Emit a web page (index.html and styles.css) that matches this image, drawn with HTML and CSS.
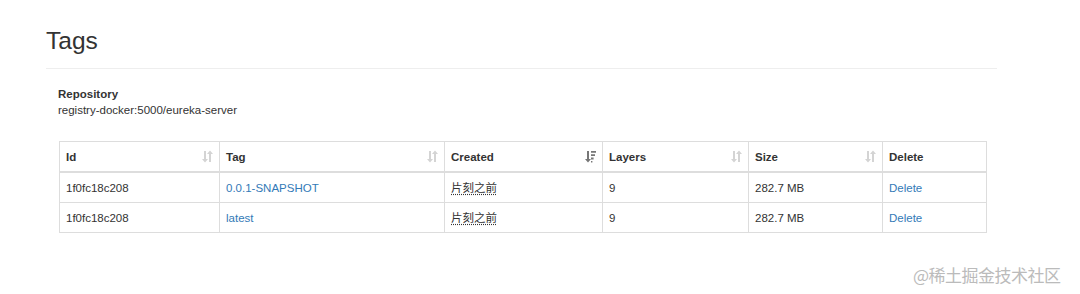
FILE: index.html
```html
<!DOCTYPE html>
<html>
<head>
<meta charset="utf-8">
<link rel="stylesheet" href="styles.css">
</head>
<body>
<div class="container">
  <div class="page-header"><h1>Tags</h1></div>
  <div class="repo">
    <div class="repo-label">Repository</div>
    <div class="repo-value">registry-docker:5000/eureka-server</div>
  </div>
  <table class="tags">
    <colgroup>
      <col style="width:160px"><col style="width:225px"><col style="width:158px"><col style="width:146px"><col style="width:134px"><col style="width:104px">
    </colgroup>
    <thead>
      <tr>
        <th><span>Id</span><svg class="sort" viewBox="0 0 11 13"><path d="M2 1h2v8h2l-3 3.5L0 9h2z"/><path d="M8 0.5l3 3.5H9v8H7V4H5z"/></svg></th>
        <th><span>Tag</span><svg class="sort" viewBox="0 0 11 13"><path d="M2 1h2v8h2l-3 3.5L0 9h2z"/><path d="M8 0.5l3 3.5H9v8H7V4H5z"/></svg></th>
        <th><span>Created</span><svg class="sort active" viewBox="0 0 11 13"><path d="M2 1h2v8h2l-3 3.5L0 9h2z"/><path d="M6 1h5v1.8H6zM6 4.3h4v1.8H6zM6 7.6h2.6v1.8H6zM6 10.9h1.4v1.6H6z"/></svg></th>
        <th><span>Layers</span><svg class="sort" viewBox="0 0 11 13"><path d="M2 1h2v8h2l-3 3.5L0 9h2z"/><path d="M8 0.5l3 3.5H9v8H7V4H5z"/></svg></th>
        <th><span>Size</span><svg class="sort" viewBox="0 0 11 13"><path d="M2 1h2v8h2l-3 3.5L0 9h2z"/><path d="M8 0.5l3 3.5H9v8H7V4H5z"/></svg></th>
        <th><span>Delete</span></th>
      </tr>
    </thead>
    <tbody>
      <tr>
        <td>1f0fc18c208</td>
        <td><a href="#">0.0.1-SNAPSHOT</a></td>
        <td><abbr>片刻之前</abbr></td>
        <td>9</td>
        <td>282.7 MB</td>
        <td><a href="#">Delete</a></td>
      </tr>
      <tr>
        <td>1f0fc18c208</td>
        <td><a href="#">latest</a></td>
        <td><abbr>片刻之前</abbr></td>
        <td>9</td>
        <td>282.7 MB</td>
        <td><a href="#">Delete</a></td>
      </tr>
    </tbody>
  </table>
</div>
<div class="watermark">@稀土掘金技术社区</div>
</body>
</html>
```

FILE: styles.css
```css
html, body {
  margin: 0;
  padding: 0;
  background: #fff;
}
body {
  font-family: "Liberation Sans", Arial, "Noto Sans CJK SC", sans-serif;
  font-size: 11.5px;
  color: #333;
  width: 1080px;
  height: 294px;
  overflow: hidden;
  position: relative;
}
.container {
  margin-left: 46px;
  width: 951px;
}
.page-header {
  border-bottom: 1px solid #eee;
  height: 41px;
  padding-top: 27px;
}
.page-header h1 {
  margin: 0;
  font-size: 24.5px;
  font-weight: normal;
  line-height: 28px;
  color: #333;
}
.repo {
  padding: 17px 0 0 12px;
  line-height: 16px;
}
.repo-label {
  font-weight: bold;
}
.tags {
  margin: 23px 0 0 13px;
  border-collapse: collapse;
  table-layout: fixed;
  width: 927px;
}
.tags th, .tags td {
  border: 1px solid #ddd;
  padding: 0 6px;
  text-align: left;
  height: 29px;
  line-height: 16px;
}
.tags th {
  font-weight: bold;
  border-bottom: 2px solid #ddd;
  position: relative;
}
.tags th span {
  display: inline-block;
}
.sort {
  position: absolute;
  right: 6px;
  top: 8px;
  width: 11px;
  height: 13px;
  fill: #d4d4d4;
}
.sort.active {
  fill: #777;
}
a {
  color: #337ab7;
  text-decoration: none;
}
abbr {
  font-family: "Noto Sans CJK SC", sans-serif;
  text-decoration: underline dotted #333;
  text-underline-offset: 2px;
}
.watermark {
  position: absolute;
  left: 913px;
  top: 262px;
  font-family: "Noto Sans CJK SC", sans-serif;
  font-size: 17px;
  color: #bbb;
  letter-spacing: -0.5px;
}
```
